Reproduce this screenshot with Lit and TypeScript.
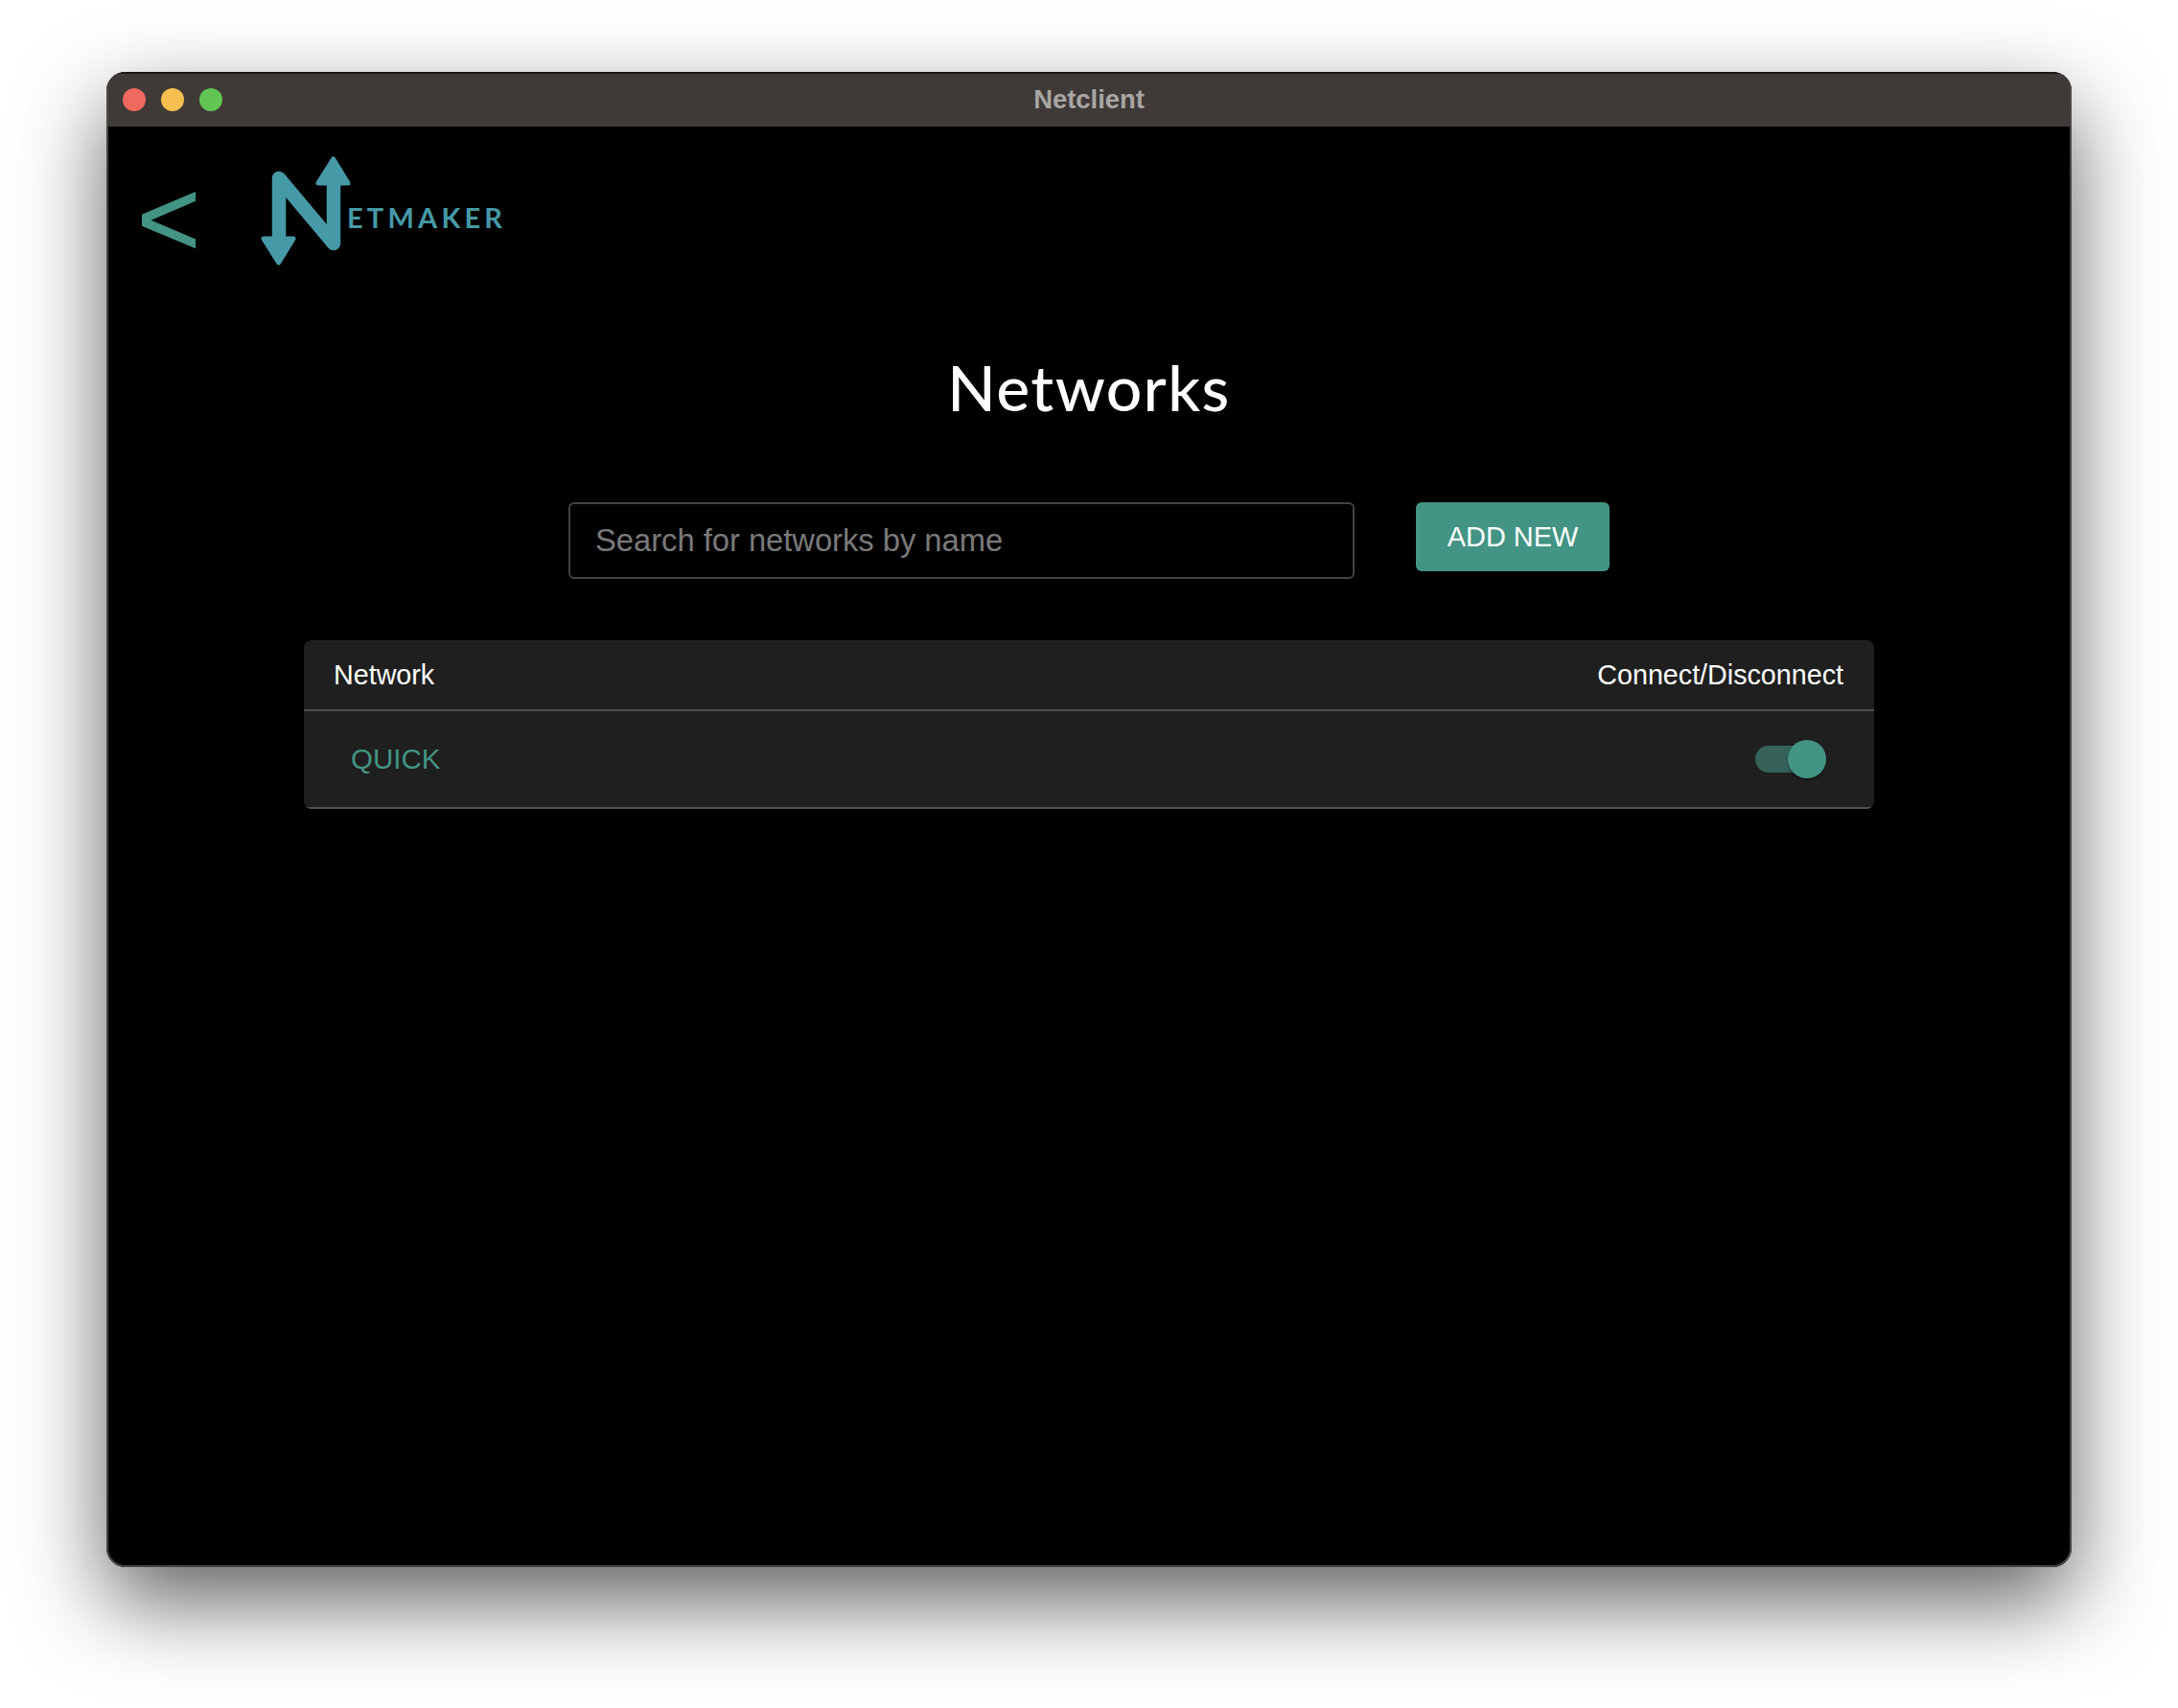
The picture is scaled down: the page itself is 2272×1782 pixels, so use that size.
import { LitElement, html, css } from 'lit';
import { customElement, state } from 'lit/decorators.js';

@customElement('app-root')
export class AppRoot extends LitElement {
    @state() private _connected = true;

    private _toggle() {
        this._connected = !this._connected;
    }

    render() {
        return html`
            <div class="window">
                <div class="titlebar">
                    <div class="lights">
                        <span class="light red"></span>
                        <span class="light yellow"></span>
                        <span class="light green"></span>
                    </div>
                    <div class="window-title">Netclient</div>
                </div>
                <div class="content">
                    <div class="top">
                        <div class="back">&lt;</div>
                        <div class="logo">
                            <svg class="mark" width="96" height="114" viewBox="270 163 96 114">
                                <path class="n" d="M291 250V186L348 254V188" />
                                <polygon class="head" points="275,249 306,249 290.7,274" />
                                <polygon class="head" points="332,191 363,191 347.7,166" />
                            </svg>
                            <span class="wordmark">ETMAKER</span>
                        </div>
                    </div>
                    <h1>Networks</h1>
                    <div class="actions">
                        <input class="search" type="text" placeholder="Search for networks by name" />
                        <button class="add">ADD NEW</button>
                    </div>
                    <div class="table">
                        <div class="head-row">
                            <span>Network</span>
                            <span>Connect/Disconnect</span>
                        </div>
                        <div class="row">
                            <span class="name">QUICK</span>
                            <div class="switch ${this._connected ? 'on' : ''}" @click=${this._toggle}>
                                <span class="track"></span>
                                <span class="knob"></span>
                            </div>
                        </div>
                    </div>
                </div>
            </div>
        `;
    }

    static styles = css`
        :host {
            display: block;
            width: 2272px;
            height: 1782px;
            padding: 75px 111px 147px;
            box-sizing: border-box;
            background: #fff;
            font-family: 'Liberation Sans', Arial, sans-serif;
        }

        .window {
            height: 100%;
            display: flex;
            flex-direction: column;
            border-radius: 20px;
            overflow: hidden;
            background: #000;
            box-shadow: inset 0 0 0 2px #444, 0 36px 90px rgba(0, 0, 0, 0.62);
        }

        .titlebar {
            position: relative;
            flex: none;
            height: 57px;
            display: flex;
            align-items: center;
            justify-content: center;
            background: #3f3a38;
            box-shadow: inset 0 2px 0 #1a1818, inset 2px 0 0 #4c4846, inset -2px 0 0 #4c4846;
        }

        .lights {
            position: absolute;
            left: 17px;
            top: 17px;
            display: flex;
            gap: 16px;
        }

        .light {
            width: 24px;
            height: 24px;
            border-radius: 50%;
        }

        .red { background: #f0695e; }
        .yellow { background: #f6bf4f; }
        .green { background: #61c554; }

        .window-title {
            color: #a9a6a4;
            font-size: 27.4px;
            font-weight: 700;
        }

        .content {
            flex: 1;
            display: flex;
            flex-direction: column;
            align-items: center;
        }

        .top {
            align-self: stretch;
            display: flex;
            align-items: flex-start;
            padding: 32px 0 0 32px;
            height: 112px;
        }

        .back {
            width: 127px;
            margin-top: 8px;
            color: #439484;
            font-size: 113px;
            line-height: 112px;
            -webkit-text-stroke: 1.2px #439484;
        }

        .logo {
            display: flex;
            align-items: flex-start;
        }

        .mark {
            display: block;
            margin-top: -1px;
            margin-right: -4px;
        }

        .n {
            fill: none;
            stroke: #4699a6;
            stroke-width: 14.5;
            stroke-linejoin: round;
        }

        .head {
            fill: #4699a6;
            stroke: #4699a6;
            stroke-width: 5;
            stroke-linejoin: round;
        }

        .wordmark {
            margin-top: 46px;
            color: #4699a6;
            font-family: Lato, sans-serif;
            font-size: 29px;
            line-height: 34px;
            font-weight: 700;
            letter-spacing: 4.2px;
        }

        h1 {
            margin: 88px 0 0;
            color: #fff;
            font-family: Lato, sans-serif;
            font-size: 66px;
            line-height: 80px;
            font-weight: 500;
            letter-spacing: 1.4px;
        }

        .actions {
            display: flex;
            align-items: flex-start;
            gap: 64px;
            margin-top: 80px;
        }

        .search {
            width: 820px;
            height: 80px;
            box-sizing: border-box;
            padding: 0 26px;
            border: 2px solid #444;
            border-radius: 6px;
            outline: none;
            background: #000;
            color: #fff;
            font-family: inherit;
            font-size: 32.7px;
        }

        .search::placeholder {
            color: #7a7a7a;
            opacity: 1;
        }

        .add {
            width: 202px;
            height: 72px;
            padding: 0;
            border: none;
            border-radius: 6px;
            background: #439484;
            color: #fff;
            font-family: inherit;
            font-size: 28.9px;
        }

        .table {
            width: 1638px;
            margin-top: 64px;
            border-radius: 8px;
            overflow: hidden;
            background: #1f1f1f;
            color: #fff;
            font-size: 28.7px;
        }

        .head-row {
            height: 72px;
            padding: 0 32px 0 31px;
            display: flex;
            align-items: center;
            justify-content: space-between;
            border-bottom: 2px solid #515151;
        }

        .row {
            height: 100px;
            padding: 0 50px 0 49px;
            display: flex;
            align-items: center;
            justify-content: space-between;
            border-bottom: 2px solid #515151;
        }

        .name {
            color: #439484;
            font-size: 29.5px;
        }

        .switch {
            position: relative;
            width: 74px;
            height: 40px;
            cursor: pointer;
        }

        .track {
            position: absolute;
            left: 0;
            right: 4px;
            top: 6px;
            height: 28px;
            border-radius: 14px;
            background: #666;
        }

        .on .track {
            background: #366259;
        }

        .knob {
            position: absolute;
            left: 0;
            top: 0;
            width: 40px;
            height: 40px;
            border-radius: 50%;
            background: #bbb;
            box-shadow: 0 2px 3px rgba(0, 0, 0, 0.4);
        }

        .on .knob {
            left: 34px;
            background: #439484;
        }
    `;
}
